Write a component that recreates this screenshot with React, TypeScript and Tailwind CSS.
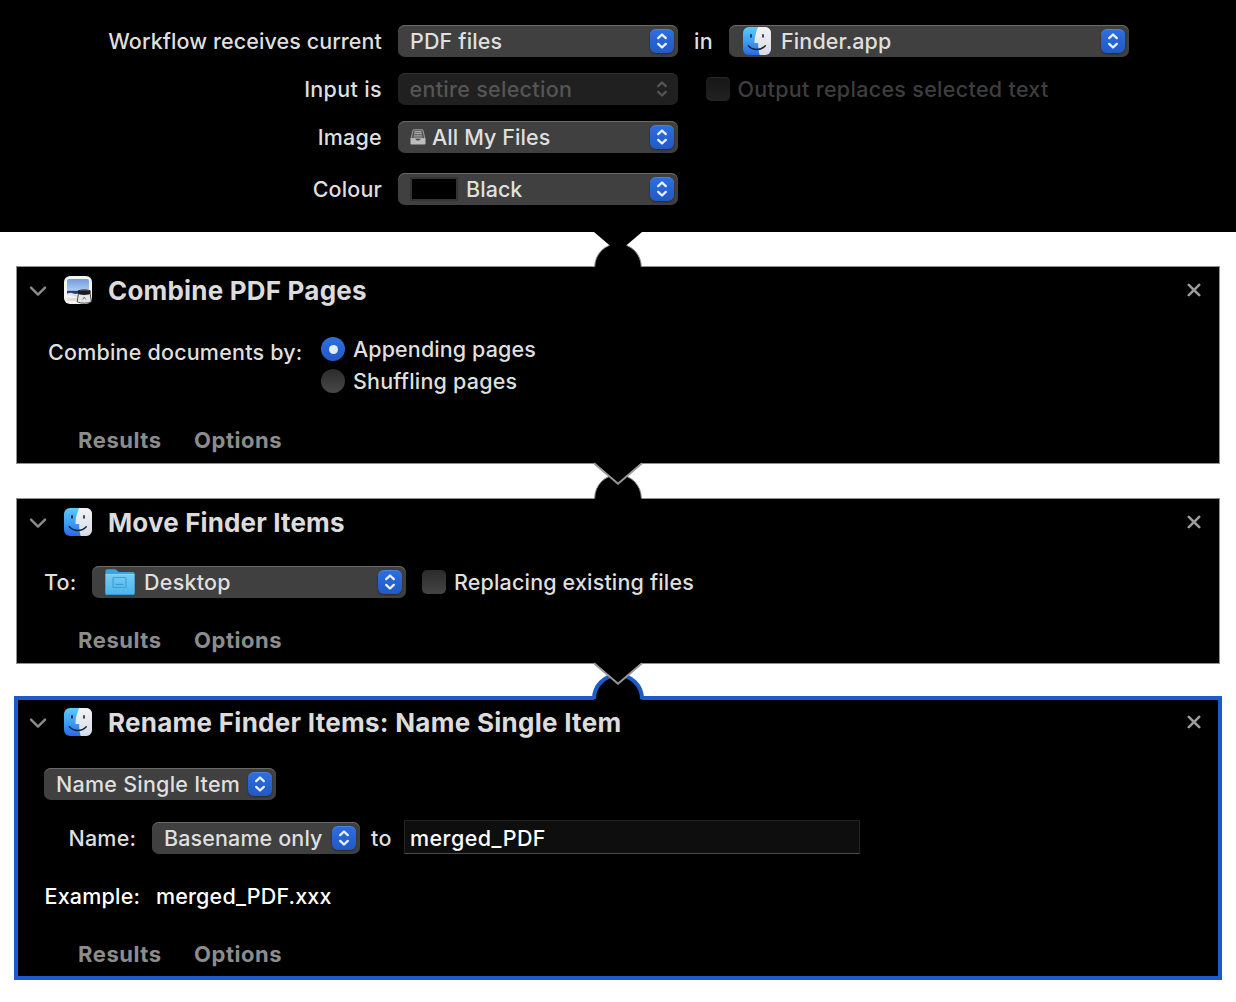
import React from "react";

function Finder({ id, className = "" }: { id: string; className?: string }) {
  return (
    <svg viewBox="0 0 28 28" className={`h-7 w-7 shrink-0 ${className}`}>
      <defs>
        <linearGradient id={`${id}-b`} x1="0" y1="0" x2="0" y2="1">
          <stop offset="0" stopColor="#5bcbfb" />
          <stop offset="0.5" stopColor="#3fa0f5" />
          <stop offset="1" stopColor="#2c67e8" />
        </linearGradient>
        <linearGradient id={`${id}-w`} x1="0" y1="0" x2="0" y2="1">
          <stop offset="0" stopColor="#f3f3f5" />
          <stop offset="1" stopColor="#d5dbe6" />
        </linearGradient>
        <clipPath id={`${id}-c`}>
          <rect width="28" height="28" rx="6" />
        </clipPath>
      </defs>
      <g clipPath={`url(#${id}-c)`}>
        <rect width="28" height="28" fill={`url(#${id}-b)`} />
        <path d="M15.2 0C13 4.600 11.800 9.800 11.400 15.400c0 .5.2.7.7.7h3.100c-.1 4.300.4 8.300 1.500 11.900H28V0z" fill={`url(#${id}-w)`} />
      </g>
      <path d="M8 7.800v2.200M20 7.800v2.200" stroke="#15202c" strokeWidth="1.600" strokeLinecap="round" />
      <path d="M5.300 18.800c4.700 5 12.400 5 17 0" fill="none" stroke="#15202c" strokeWidth="1.400" strokeLinecap="round" />
    </svg>
  );
}

function PreviewIcon() {
  return (
    <svg viewBox="0 0 28 28" className="h-7 w-7 shrink-0">
      <defs>
        <linearGradient id="sky" x1="0" y1="0" x2="0" y2="1">
          <stop offset="0" stopColor="#6e9be0" />
          <stop offset="1" stopColor="#b4d0f4" />
        </linearGradient>
      </defs>
      <rect width="28" height="28" rx="6" fill="#f4f4f4" />
      <rect x="3" y="3" width="22" height="12.500" rx="2" fill="url(#sky)" />
      <path d="M3 14.800h22v3.400H3z" fill="#2a3c72" />
      <path d="M3 17.600l4-.8 4 1.200 4-.6v2.600H3z" fill="#dfe6ee" />
      <path d="M3 19.200h22V23a2 2 0 0 1-2 2H5a2 2 0 0 1-2-2z" fill="#e3dcd5" />
      <path d="M3 19.200l5 .2 4 1.400 3 .4v1.200l-6-.6-6 .2z" fill="#f4f2f0" />
      <path d="M14.400 17.800h11.800l1.200 8c-3.800 1.900-10.600 1.900-14.200 0z" fill="#e4e6e8" stroke="#3a3d40" strokeWidth="0.900" />
      <path d="M18.800 23.500l1.400-2.400 1.600 2.400" stroke="#666" strokeWidth="0.800" fill="none" />
      <path d="M14 14.600c2.400-1.400 10-1.400 12.600 0v3c-2.600 1.900-10.200 1.900-12.600 0z" fill="#1c1c1f" />
      <path d="M15.400 14.700c2.400-.8 7.400-.8 9.800 0" stroke="#6a6a70" strokeWidth="0.700" fill="none" />
    </svg>
  );
}

function Folder() {
  return (
    <svg viewBox="0 0 30 28" className="ml-[13px] h-7 w-[30px] shrink-0">
      <defs>
        <linearGradient id="fold" x1="0" y1="0" x2="0" y2="1">
          <stop offset="0" stopColor="#74cdf6" />
          <stop offset="1" stopColor="#4db3e9" />
        </linearGradient>
      </defs>
      <path d="M.5 3.200C.5 2 1.200 1.300 2.300 1.300h7.300c.9 0 1.400.3 2 .9l1 1c.5.5 1 .7 1.700.7h13.400c1.200 0 1.800.7 1.800 1.800v19.500c0 1.100-.7 1.800-1.800 1.800H2.300C1.200 27 .5 26.300.5 25.200z" fill="#3fa3da" />
      <path d="M.5 6.400h29v18.800c0 1.100-.7 1.800-1.800 1.800H2.300C1.200 27 .5 26.300.5 25.200z" fill="url(#fold)" />
      <path d="M.5 6.500h29" stroke="#94dcfa" strokeWidth="0.800" />
      <rect x="8" y="9.500" width="13" height="10" rx="1" fill="none" stroke="#3f9fd4" strokeWidth="1.200" />
      <path d="M10.500 16.500h8" stroke="#3f9fd4" strokeWidth="1.400" />
      <path d="M1.500 26.500h27" stroke="#3b98cd" strokeWidth="1" />
    </svg>
  );
}

function Tray() {
  return (
    <svg viewBox="0 0 16 16" className="ml-[11.5px] h-4 w-4 shrink-0">
      <path d="M3.200.8h9.600L15 9.600H1z" fill="#55565a" stroke="#a4a4a4" strokeWidth="0.900" />
      <path d="M4.500 2.600h7M4.200 4.400h7.600M3.900 6.200h8.200M3.600 8h8.800" stroke="#a2a2a2" strokeWidth="1.100" />
      <path d="M.5 9.200h4.700c.3 1.500 1.400 2.200 2.800 2.200s2.500-.7 2.800-2.200h4.700v5.200c0 .7-.4 1.100-1.100 1.100H1.600c-.7 0-1.100-.4-1.100-1.100z" fill="#bcbcbc" />
    </svg>
  );
}

function Arrows({ disabled = false }: { disabled?: boolean }) {
  return (
    <span
      className={
        disabled
          ? "ml-auto flex h-6 w-6 shrink-0 text-[#555]"
          : "ml-auto flex h-6 w-6 shrink-0 rounded-[6px] bg-linear-to-b from-[#2d6fe0] to-[#2259c4] text-[#eaf0fc] shadow-[0_1px_2px_rgba(0,0,0,0.4),inset_0_1px_0_rgba(255,255,255,0.15)]"
      }
    >
      <svg viewBox="0 0 24 24" className="h-6 w-6" fill="none" stroke="currentColor" strokeWidth="2.300" strokeLinecap="round" strokeLinejoin="round">
        <path d="M8.200 9.100L12 5.500l3.800 3.600M8.200 14.900l3.800 3.600 3.800-3.600" />
      </svg>
    </span>
  );
}

function Select({ className, disabled = false, children }: { className: string; disabled?: boolean; children: React.ReactNode }) {
  return (
    <div
      className={`flex h-8 shrink-0 items-center rounded-[7px] pr-1 ${className} ${
        disabled
          ? "bg-[#202020] text-[#555] shadow-[inset_0_1px_0_#303030]"
          : "bg-[#404040] text-[#dfdfdf] shadow-[inset_0_1px_0_#6a6a6a]"
      }`}
    >
      {children}
      <Arrows disabled={disabled} />
    </div>
  );
}

function Row({ label, labelClass = "", className = "", children }: { label: string; labelClass?: string; className?: string; children: React.ReactNode }) {
  return (
    <div className={`flex h-8 items-center ${className}`}>
      <div className={`mr-4 w-[382px] shrink-0 text-right ${labelClass}`}>{label}</div>
      {children}
    </div>
  );
}

function CardHeader({ icon, title, className }: { icon: React.ReactNode; title: string; className: string }) {
  return (
    <div className={`flex items-center ${className}`}>
      <svg viewBox="0 0 18 12" className="mt-px mr-[17px] h-3 w-[18px]" fill="none" stroke="#8b8b8b" strokeWidth="2.400" strokeLinecap="round" strokeLinejoin="round">
        <path d="M2 2.600l7 7 7-7" />
      </svg>
      {icon}
      <h2 className="mt-px ml-4 text-[26px] font-bold text-[#dcdcdc]">{title}</h2>
      <svg viewBox="0 0 14 14" className="ml-auto h-3.5 w-3.5" fill="none" stroke="#9b9b9b" strokeWidth="2.600" strokeLinecap="round">
        <path d="M1.800 1.800l10.400 10.400M12.200 1.800L1.800 12.200" />
      </svg>
    </div>
  );
}

function CardFooter({ className }: { className: string }) {
  return (
    <div className={`mt-auto flex items-center text-[22px] font-bold text-[#8c8c8c] ${className}`}>
      <span className="w-[116px] tracking-[0.55px]">Results</span>
      <span className="tracking-[0.55px]">Options</span>
    </div>
  );
}

function Connector({ kind, className }: { kind: "header" | "plain" | "selected"; className: string }) {
  const selected = kind === "selected";
  const arc = selected
    ? "M4 37a24 24 0 0 1 48 0"
    : kind === "plain"
      ? "M4.700 36a23.300 23.300 0 0 1 46.600 0"
      : "M4.700 35a23.300 23.300 0 0 1 46.600 0";
  return (
    <svg viewBox="0 0 56 40" className={`relative z-10 mx-auto block h-10 w-14 ${className}`}>
      <path d={`${arc}v3H5z`} fill="#000" />
      <path d={arc} fill="none" stroke={selected ? "#1b5bcb" : "#8c8c8c"} strokeWidth={selected ? 4 : 1} />
      {kind === "header" ? (
        <path d="M4 0L28 20.500 52 0z" fill="#000" />
      ) : (
        <>
          <path d="M3.500 0h49L28 21.500z" fill="#000" />
          <path d="M4 1.200l24 20.500L52 1.200" fill="none" stroke="#999" strokeWidth="1.900" />
        </>
      )}
    </svg>
  );
}

const plainCard = "mx-4 flex flex-col border border-[#909090] bg-black";

export default function App() {
  return (
    <main className="h-[1002px] w-[1236px] overflow-hidden bg-white font-['Inter',sans-serif] text-[21.5px] leading-8 font-[450] whitespace-nowrap text-[#dfdfdf]">
      <header className="flex h-[232px] flex-col gap-4 bg-black pt-[25px]">
        <Row label="Workflow receives current" labelClass="tracking-[0.09px]">
          <Select className="w-[280px] pl-3">
            <span className="tracking-[0.14px]">PDF files</span>
          </Select>
          <span className="mx-4 w-[19px] tracking-[0.4px]">in</span>
          <Select className="w-[400px] pl-3.5">
            <Finder id="app" />
            <span className="ml-2.5 tracking-[0.12px]">Finder.app</span>
          </Select>
        </Row>
        <Row label="Input is" labelClass="tracking-[0.35px]">
          <Select className="w-[280px] pl-[11.5px]" disabled>
            <span className="tracking-[0.3px]">entire selection</span>
          </Select>
          <span className="ml-7 h-6 w-6 rounded-[5px] bg-linear-to-b from-[#161616] to-[#222] shadow-[inset_0_1px_0_#2a2a2a]" />
          <span className="ml-[7.5px] tracking-[0.31px] text-[#3e3e3e]">Output replaces selected text</span>
        </Row>
        <Row label="Image" labelClass="tracking-[0.25px]">
          <Select className="w-[280px]">
            <Tray />
            <span className="ml-[6.5px] tracking-[0.08px]">All My Files</span>
          </Select>
        </Row>
        <Row label="Colour" labelClass="tracking-[0.15px]" className="mt-1">
          <Select className="w-[280px] pl-3">
            <span className="h-6 w-12 border-2 border-[#333] bg-black" />
            <span className="ml-2 tracking-[0.05px]">Black</span>
          </Select>
        </Row>
      </header>

      <Connector kind="header" className="-mb-1.5" />

      <section className={`${plainCard} h-[198px]`}>
        <CardHeader icon={<PreviewIcon />} title="Combine PDF Pages" className="h-[46px] pr-[18px] pl-3 tracking-[0.2px]" />
        <div className="mt-[21px] flex pl-[31px]">
          <span className="mt-0.5 w-[273px] tracking-[0.2px]">Combine documents by:</span>
          <div className="-mt-px">
            <div className="flex h-8 items-center">
              <span className="mr-2 flex h-6 w-6 items-center justify-center rounded-full bg-linear-to-b from-[#2d6fe0] to-[#2259c4]">
                <span className="h-[9px] w-[9px] rounded-full bg-[#e4ecfb]" />
              </span>
              <span className="tracking-[0.1px]">Appending pages</span>
            </div>
            <div className="flex h-8 items-center">
              <span className="mr-2 h-6 w-6 rounded-full bg-linear-to-b from-[#2c2c2c] to-[#484848]" />
              <span className="tracking-[0.2px]">Shuffling pages</span>
            </div>
          </div>
        </div>
        <CardFooter className="h-[46px] pl-[61px]" />
      </section>

      <Connector kind="plain" className="-mt-0.5 -mb-1" />

      <section className={`${plainCard} h-[166px]`}>
        <CardHeader icon={<Finder id="move" />} title="Move Finder Items" className="h-[46px] pr-[18px] pl-3 tracking-[0.14px]" />
        <div className="mt-[21px] flex h-8 items-center pl-[27px]">
          <span className="w-12 tracking-[0.2px]">To:</span>
          <Select className="w-[314px]">
            <Folder />
            <span className="ml-[9px] tracking-[0.24px]">Desktop</span>
          </Select>
          <span className="ml-4 h-6 w-6 rounded-[5px] bg-linear-to-b from-[#2b2b2b] to-[#454545]" />
          <span className="ml-2 tracking-[0.16px]">Replacing existing files</span>
        </div>
        <CardFooter className="h-[46px] pl-[61px]" />
      </section>

      <Connector kind="selected" className="-mt-0.5 -mb-[6px]" />

      <section className="mx-3.5 flex h-[284px] flex-col border-4 border-[#1b5bcb] bg-black">
        <CardHeader icon={<Finder id="rename" />} title="Rename Finder Items: Name Single Item" className="h-11 pr-[17px] pl-[11px] tracking-[0.27px]" />
        <Select className="mt-6 ml-[26px] w-[232px] pl-3">
          <span className="tracking-[0.24px]">Name Single Item</span>
        </Select>
        <div className="mt-5 flex h-[34px] items-center pl-[50.5px]">
          <span className="mt-0.5 w-[83.5px] tracking-[0.2px]">Name:</span>
          <Select className="mt-0.5 w-[208px] pl-3">
            <span className="tracking-[0.12px]">Basename only</span>
          </Select>
          <span className="mt-0.5 ml-[11px] w-[33px] tracking-[0.4px]">to</span>
          <div className="flex h-[34px] w-[456px] items-center border border-b-[#4a4a4a] border-[#222] bg-[#0e0e0e] pt-0.5 pl-[5px] font-medium tracking-[0.43px] text-white">
            <span>merged_PDF</span>
          </div>
        </div>
        <div className="mt-[26px] flex pl-[26.5px] text-white">
          <span className="w-[111.5px] tracking-[0.2px]">Example:</span>
          <span className="tracking-[0.16px]">merged_PDF.xxx</span>
        </div>
        <CardFooter className="h-11 pl-[60px]" />
      </section>
    </main>
  );
}
